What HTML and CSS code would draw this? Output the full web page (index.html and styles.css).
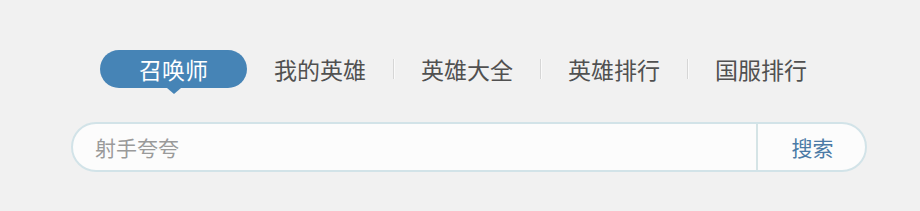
FILE: index.html
```html
<!DOCTYPE html>
<html lang="zh-CN">
<head>
<meta charset="utf-8">
<link rel="stylesheet" href="styles.css">
</head>
<body>
<div class="wrap">
  <nav class="tabs">
    <a class="tab active">召唤师</a>
    <a class="tab">我的英雄</a>
    <span class="sep"></span>
    <a class="tab">英雄大全</a>
    <span class="sep"></span>
    <a class="tab">英雄排行</a>
    <span class="sep"></span>
    <a class="tab">国服排行</a>
  </nav>
  <form class="search">
    <input class="search-input" type="text" placeholder="射手夸夸">
    <button class="search-btn" type="button">搜索</button>
  </form>
</div>
</body>
</html>
```

FILE: styles.css
```css
html, body {
  margin: 0;
  padding: 0;
  background: #f1f1f1;
}
body {
  font-family: "Noto Sans CJK SC", "Microsoft YaHei", sans-serif;
  width: 920px;
  height: 211px;
  overflow: hidden;
}
.wrap {
  padding: 50px 0 0 71px;
}
.tabs {
  display: flex;
  align-items: center;
  gap: 27px;
  margin-left: 29px;
  height: 38px;
}
.tab {
  font-size: 23px;
  line-height: 38px;
  color: #505050;
  white-space: nowrap;
}
.tab.active {
  position: relative;
  background: #4684b6;
  color: #fff;
  border-radius: 19px;
  height: 38px;
  box-sizing: border-box;
  width: 147px;
  text-align: center;
  padding: 0;
}
.tab.active::after {
  content: "";
  position: absolute;
  left: 50%;
  bottom: -6px;
  margin-left: -7px;
  border-left: 7px solid transparent;
  border-right: 7px solid transparent;
  border-top: 6px solid #4684b6;
}
.sep {
  width: 1px;
  height: 20px;
  background: #d6d6d6;
  box-shadow: 1px 0 0 #fafafa;
}
.search {
  display: flex;
  margin-top: 34px;
  width: 796px;
  height: 50px;
  box-sizing: border-box;
  border: 2px solid #d2e3e8;
  border-radius: 25px;
  background: #fcfcfc;
  overflow: hidden;
}
.search-input {
  flex: 1;
  border: 0;
  outline: 0;
  background: transparent;
  padding: 0 0 0 22px;
  font-family: inherit;
  font-size: 21px;
  color: #333;
  height: 46px;
}
.search-input::placeholder {
  color: #9a9a9a;
}
.search-btn {
  width: 109px;
  border: 0;
  border-left: 2px solid #d5e4e6;
  background: transparent;
  font-family: inherit;
  font-size: 21px;
  color: #4b7aa6;
  padding: 0 0 0 2px;
  height: 46px;
}
```
